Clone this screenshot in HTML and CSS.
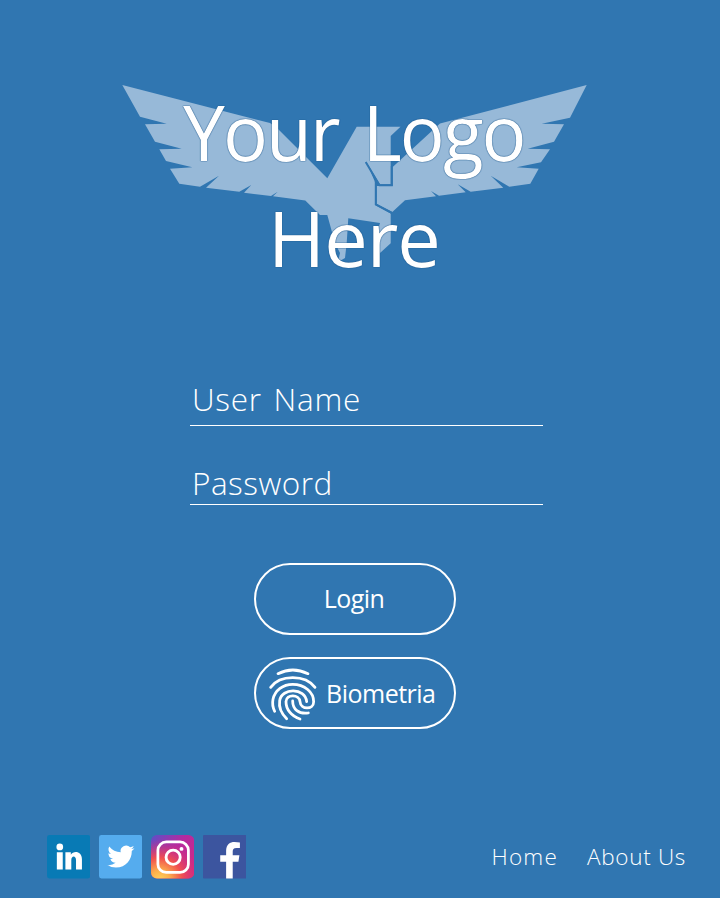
FILE: index.html
```html
<!DOCTYPE html>
<html lang="en">
<head>
<meta charset="utf-8">
<title>Login</title>
<link rel="stylesheet" href="styles.css">
</head>
<body>
<main class="screen">
  <header class="brand">
    <svg class="eagle" viewBox="120 80 470 185" aria-hidden="true">
      <path d="M122.3 85 270 123 277 128 327.3 178.3 356.7 126.7H400.5L390.7 136V184.3H380L366.5 162.3 375 182V205L390.7 213.5V243.3L380 253 373 259V247L380 223 348.3 218.3 346.7 243 345 258 338 262 340 253 335 243 327.3 215H320L305.3 200.5 273 196.3 277.7 191.7 271 196 244 192.7 251.3 185 239.3 191.7 206 187.7 219 175.7 200 186.7 179.3 183.7 170 168.7 192.3 167.3 166 161 159.3 149.3 181.7 148.7 155 141.7 145 124.3 166.7 123.7 140 116.7Z"/>
      <path d="M586.7 85 440 123.5 392.7 167V186H376.7V204L392.3 212 405 200.3 436 196.3 431 191 439 195.7 465.7 192.3 457.7 184.3 470.7 191.7 503.3 187.7 490.7 175.7 509.3 186.7 530.3 183.7 538.7 168.7 516.7 167.3 541 162.3 550 149.3 527.7 148.7 554 141.7 564 124.3 541.7 123.7 570 117.7Z"/>
      <path class="eagle-seam" d="M365.7 162 379.5 185.3H391.8V166M375.8 181V204.500L392 213"/>
    </svg>
    <h1 class="brand-name"><span class="brand-top">Your Logo</span><span class="brand-bottom">Here</span></h1>
  </header>

  <form class="login">
    <div class="field"><span class="field-label user">User Name</span></div>
    <div class="field second"><span class="field-label pass">Password</span></div>
    <button class="pill" type="button"><span class="login-text">Login</span></button>
    <button class="pill bio" type="button">
      <svg class="finger" viewBox="0 0 186 192" aria-hidden="true">
        <path d="M48 38Q92 16 138 38M26 79C54 40 130 40 159 79M38 151C30 135 31 125 33 115C39 88 63 70 92 70C128 70 155 94 155 122C155 147 116 147 114 122C112 99 73 98 72 122C72 145 88 166 114 174M74 173C58 157 50 138 53 119C59 79 130 80 134 122M92 120C92 145 110 160 139 156"/>
      </svg>
      <span class="bio-text">Biometria</span>
    </button>
  </form>

  <footer class="footer">
    <div class="social">
      <svg viewBox="0 0 44 44" role="img" aria-label="LinkedIn">
        <rect width="44" height="44" rx="2.5" fill="#087ab5"/>
        <circle cx="13" cy="12" r="3.4" fill="#fff"/>
        <path fill="#fff" d="M10 17.500H16V35H10ZM18.700 17.500H24.200V20C27 15.300 35.500 16.200 35.500 24.500V35H29.500V25.500C29.500 20.500 24.700 20.500 24.700 25.500V35H18.700Z"/>
      </svg>
      <svg viewBox="0 0 44 44" role="img" aria-label="Twitter">
        <rect width="44" height="44" rx="2.500" fill="#55acee"/>
        <path fill="#fff" transform="translate(8.500 8) scale(1.150)" d="M23.950 4.570a10 10 0 0 1-2.820.77 4.960 4.960 0 0 0 2.160-2.720 9.900 9.900 0 0 1-3.120 1.180 4.920 4.920 0 0 0-8.380 4.480A13.930 13.930 0 0 1 1.640 3.160a4.920 4.920 0 0 0 1.520 6.570 4.900 4.900 0 0 1-2.230-.61v.06a4.920 4.920 0 0 0 3.950 4.830 5 5 0 0 1-2.210.08 4.940 4.940 0 0 0 4.600 3.420A9.870 9.870 0 0 1 0 19.540a13.990 13.990 0 0 0 7.560 2.210c9.050 0 14-7.500 14-13.980 0-.21 0-.42-.02-.63a9.940 9.940 0 0 0 2.410-2.570Z"/>
      </svg>
      <svg viewBox="0 0 44 44" role="img" aria-label="Instagram">
        <defs>
          <linearGradient id="sky" x1="0" y1="0" x2="1" y2=".9"><stop stop-color="#5b50c8"/><stop offset=".45" stop-color="#b52aa0"/><stop offset="1" stop-color="#d32a80"/></linearGradient>
          <radialGradient id="sun" cx=".2" cy="1.050" r=".95"><stop stop-color="#ffd65c"/><stop offset=".25" stop-color="#fcae4c"/><stop offset=".55" stop-color="#f1504f"/><stop offset="1" stop-color="#d52c80" stop-opacity="0"/></radialGradient>
        </defs>
        <rect width="44" height="44" rx="6" fill="url(#sky)"/><rect width="44" height="44" rx="6" fill="url(#sun)"/>
        <rect x="7" y="7" width="31" height="31" rx="8.500" fill="none" stroke="#fff" stroke-width="2.800"/>
        <circle cx="22.500" cy="22.500" r="7.200" fill="none" stroke="#fff" stroke-width="2.900"/><circle cx="31" cy="14" r="2" fill="#fff"/>
      </svg>
      <svg viewBox="0 0 44 44" role="img" aria-label="Facebook">
        <rect width="44" height="44" rx="1" fill="#3c559f"/>
        <path fill="#fff" d="M23.500 44V27H17.500V20.500H23.500V16C23.500 9.500 27.500 7 32 7Q35 7 37.500 7.400V13H34C31 13 30.200 14.300 30.200 17V20.500H37L36 27H30.200V44Z"/>
      </svg>
    </div>
    <nav class="links"><a class="home">Home</a><a class="about">About Us</a></nav>
  </footer>
</main>
</body>
</html>
```
FILE: styles.css
```css
* { box-sizing: border-box; }
body { margin: 0; background: #3076b1; color: #fff; font-family: "Open Sans", sans-serif; }
.screen { width: 720px; height: 898px; display: flex; flex-direction: column; overflow: hidden; }
.brand { position: relative; height: 376px; padding-top: 79px; }
.eagle { position: absolute; left: 120px; top: 80px; width: 470px; height: 185px; fill: #97b9d8; }
.eagle-seam { fill: none; stroke: #3076b1; stroke-width: 2; }
.brand-name { position: relative; margin: 0; font-size: 77.5px; font-weight: 430; line-height: 105.5px; display: flex; flex-direction: column; align-items: flex-start; text-shadow: 0 0 1px #245d90, 0 0 1px #245d90, 0 0 1px #245d90; }
.brand-top { margin-left: 183px; letter-spacing: -2px; word-spacing: 7px; white-space: pre; transform: scaleX(.965); transform-origin: left; }
.brand-bottom { margin-left: 268px; letter-spacing: -1px; }
.login { display: flex; flex-direction: column; flex: 1; padding-left: 190px; }
.field { width: 353px; height: 50px; border-bottom: 1px solid #fff; padding-left: 2px; line-height: 45px; font-size: 31.5px; font-weight: 320; }
.second { height: 49px; margin-top: 30px; line-height: 53px; }
.field-label { display: block; white-space: nowrap; }
.user { letter-spacing: .7px; word-spacing: 3px; }
.pass { letter-spacing: .5px; }
.pill { width: 202px; height: 72px; margin: 58px 0 0 64px; border: 2px solid #fff; border-radius: 36px; background: none; color: #fff; font: 430 25px/34px "Open Sans", sans-serif; padding: 0; display: flex; align-items: center; justify-content: center; }
.login-text { letter-spacing: -.6px; margin: -2px 2px 0 0; }
.bio { margin-top: 22px; justify-content: flex-start; padding-left: 6px; }
.bio-text { margin: -1px 0 0 2px; letter-spacing: -.5px; }
.finger { width: 62px; height: 64px; flex: none; fill: none; stroke: #fff; stroke-width: 8.3; stroke-linecap: round; }
.footer { display: flex; justify-content: space-between; height: 63px; padding: 0 34px 0 47px; }
.social { display: flex; gap: 8.7px; }
.social svg { width: 43.3px; height: 43.5px; }
.links { display: flex; gap: 29px; font-size: 22.5px; font-weight: 300; line-height: 44px; white-space: nowrap; }
.home { letter-spacing: 1.2px; }
.about { letter-spacing: .7px; }
```
